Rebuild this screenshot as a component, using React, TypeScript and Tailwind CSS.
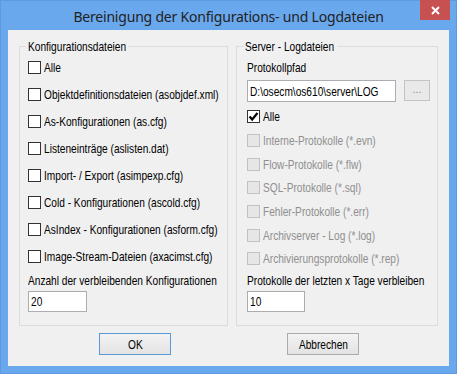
import React from "react";

function T({ children, center = false }: { children: React.ReactNode; center?: boolean }) {
  return (
    <span
      className={
        center
          ? "inline-block whitespace-nowrap origin-center scale-x-[0.78]"
          : "inline-block whitespace-nowrap origin-left scale-x-[0.78]"
      }
    >
      {children}
    </span>
  );
}

function Box({ checked = false, disabled = false }: { checked?: boolean; disabled?: boolean }) {
  if (disabled) {
    return <span className="block w-[13px] h-[13px] shrink-0 border border-[#c2c2c2] bg-[#e6e6e6]" />;
  }
  return (
    <span className="flex w-[13px] h-[13px] shrink-0 items-center justify-center border border-[#333333] bg-white">
      {checked && (
        <svg width="11" height="11" viewBox="0 0 11 11">
          <path d="M1.5 5.5 L4.2 8.5 L9.5 2" fill="none" stroke="#000" strokeWidth="2.2" />
        </svg>
      )}
    </span>
  );
}

function Row({ label, h, checked, disabled }: { label: string; h: string; checked?: boolean; disabled?: boolean }) {
  return (
    <div className={`flex items-center gap-[3px] ${h}`}>
      <Box checked={checked} disabled={disabled} />
      <span className={disabled ? "text-[#8f8f8f]" : "text-black"}>
        <T>{label}</T>
      </span>
    </div>
  );
}

const leftItems = [
  "Alle",
  "Objektdefinitionsdateien (asobjdef.xml)",
  "As-Konfigurationen (as.cfg)",
  "Listeneinträge (aslisten.dat)",
  "Import- / Export (asimpexp.cfg)",
  "Cold - Konfigurationen (ascold.cfg)",
  "AsIndex - Konfigurationen (asform.cfg)",
  "Image-Stream-Dateien (axacimst.cfg)",
];

const rightItems = [
  "Interne-Protokolle (*.evn)",
  "Flow-Protokolle (*.flw)",
  "SQL-Protokolle (*.sql)",
  "Fehler-Protokolle (*.err)",
  "Archivserver - Log (*.log)",
  "Archivierungsprotokolle (*.rep)",
];

export default function App() {
  return (
    <div className="w-[457px] h-[374px] bg-[#6aa8ee] border border-[#5f9ae0] flex flex-col font-['Liberation_Sans',sans-serif] text-[13px] leading-[15px] text-black">
      {/* Title bar */}
      <div className="relative h-[29px] shrink-0 flex items-center justify-center">
        <span className="font-['Noto_Sans',sans-serif] text-[14px] tracking-[-0.2px] text-[#222222] mt-[1px]">
          Bereinigung der Konfigurations- und Logdateien
        </span>
        <div className="absolute right-[6px] top-[-1px] w-[30px] h-[20px] bg-[#c75050] flex items-center justify-center">
          <svg width="9" height="9" viewBox="0 0 9 9">
            <path d="M1 1 L8 8 M8 1 L1 8" stroke="#fff" strokeWidth="2" />
          </svg>
        </div>
      </div>

      {/* Client area */}
      <div className="mx-[7px] flex-1 mb-[7px] bg-[#f0f0f0] pt-[16px] pl-[11px] flex flex-col">
        <div className="flex gap-[8px]">
          {/* Left group */}
          <div className="w-[209px] h-[280px] border border-[#dcdcdc] pl-[8px]">
            <div className="-mt-[8px] w-[102px] -ml-[2px] pl-[2px] bg-[#f0f0f0] h-[15px]">
              <T>Konfigurationsdateien</T>
            </div>
            {leftItems.map((t) => (
              <Row key={t} label={t} h="h-[27px]" />
            ))}
            <div className="h-[20px] flex items-center">
              <T>Anzahl der verbleibenden Konfigurationen</T>
            </div>
            <div className="mt-[1px] w-[59px] h-[21px] border border-[#abadb3] bg-white pl-[2px] flex items-center">
              <T>20</T>
            </div>
          </div>

          {/* Right group */}
          <div className="w-[202px] h-[280px] border border-[#dcdcdc] pl-[10px]">
            <div className="-mt-[8px] w-[93px] -ml-[3px] pl-[1px] bg-[#f0f0f0] h-[15px]">
              <T>Server - Logdateien</T>
            </div>
            <div className="h-[26px] flex items-center">
              <T>Protokollpfad</T>
            </div>
            <div className="flex items-start gap-[8px]">
              <div className="w-[149px] h-[22px] border border-[#abadb3] bg-white pl-[2px] flex items-center overflow-hidden">
                <T>D:\osecm\os610\server\LOG</T>
              </div>
              <div className="w-[26px] h-[21px] border border-[#c4c4c4] bg-[#e9e9e9] flex items-center justify-center text-[#8a8a8a] text-[11px] pb-[3px]">
                ...
              </div>
            </div>
            <div className="mt-[3px]">
              <Row label="Alle" h="h-[23.7px]" checked />
              {rightItems.map((t) => (
                <Row key={t} label={t} h="h-[23.7px]" disabled />
              ))}
            </div>
            <div className="h-[19px] flex items-center">
              <T>Protokolle der letzten x Tage verbleiben</T>
            </div>
            <div className="mt-[1px] w-[58px] h-[21px] border border-[#abadb3] bg-white pl-[2px] flex items-center">
              <T>10</T>
            </div>
          </div>
        </div>

        {/* Buttons */}
        <div className="mt-[7px] flex pl-[80px]">
          <div className="w-[72px] h-[22px] border border-[#5b9bd5] bg-gradient-to-b from-[#f2f2f2] to-[#e3e3e3] flex items-center justify-center">
            <T center>OK</T>
          </div>
          <div className="ml-[116px] w-[72px] h-[22px] border border-[#acacac] bg-gradient-to-b from-[#f2f2f2] to-[#e3e3e3] flex items-center justify-center">
            <T center>Abbrechen</T>
          </div>
        </div>
      </div>
    </div>
  );
}
